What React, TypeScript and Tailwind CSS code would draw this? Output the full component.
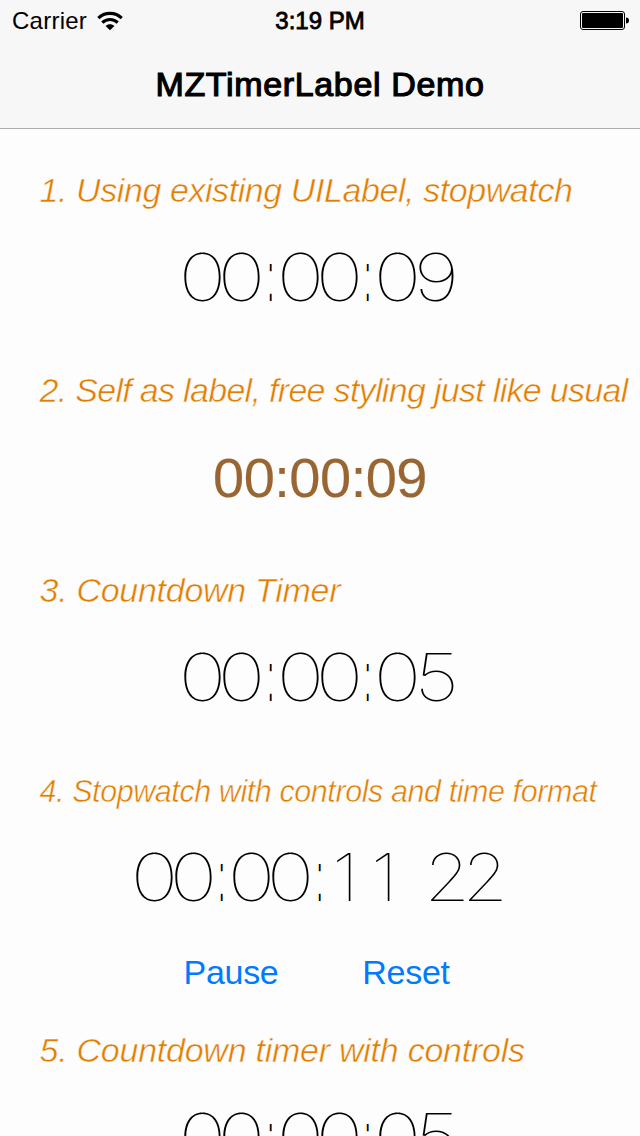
import React from "react";

const digitFit: Record<string, string> = {
  "0": "scale-x-[1.23]",
  "1": "-translate-x-[3px] scale-x-[1.1]",
  "2": "-translate-x-[0.5px] scale-x-[1.12]",
  "5": "translate-x-[0.5px] scale-x-[1.2]",
  "9": "scale-x-[1.23]",
};

function Glyph({ char }: { char: string }) {
  if (char === ":") {
    return (
      <span className="inline-block w-[19.5px] origin-center scale-x-[0.25] text-center font-['Liberation_Sans',Arial,sans-serif] text-[70px]">
        :
      </span>
    );
  }
  if (char === " ") {
    return <span className="inline-block w-[19.5px] whitespace-pre"> </span>;
  }
  return <span className={`inline-block w-[38.9px] text-center ${digitFit[char]}`}>{char}</span>;
}

function ThinClock({ value }: { value: string }) {
  return (
    <div className="flex h-[96px] items-baseline justify-center pr-[1px] font-[Inter,sans-serif] text-[66px] leading-[96px] font-[100] text-black">
      {value.split("").map((char, i) => (
        <Glyph key={i} char={char} />
      ))}
    </div>
  );
}

function Caption({ children, className }: { children: string; className: string }) {
  return (
    <h2
      className={`h-[44px] pl-[39.5px] leading-[44px] whitespace-nowrap text-[#e37d00] italic [-webkit-text-stroke:0.5px_#fdfdfd] ${className}`}
    >
      {children}
    </h2>
  );
}

export default function App() {
  return (
    <div className="h-[1136px] w-[640px] overflow-hidden bg-[#fdfdfd] font-['Liberation_Sans',Arial,sans-serif]">
      <header className="h-[129px] border-b border-[#adadad] bg-[#f7f7f7] text-black">
        <div className="grid h-[41px] grid-cols-3 items-center">
          <div className="flex items-center pl-[12px] text-[24px]">
            <span className="tracking-[0.25px]">Carrier</span>
            <svg className="ml-[10px] h-[20px] w-[26px]" viewBox="0 0 26 20" fill="none" stroke="black" strokeWidth="3.1">
              <path d="M1.300 7.200C7.500 0.800 18.500 0.800 24.700 7.200" />
              <path d="M5.300 11.700C9.500 7.500 16.500 7.500 20.700 11.700" />
              <path d="M8.600 14.900C11 12.600 15 12.600 17.400 14.900L13 19.300Z" fill="black" stroke="none" />
            </svg>
          </div>
          <div className="text-center text-[24px] [-webkit-text-stroke:0.8px_black]">3:19 PM</div>
          <svg className="ml-auto mr-[10px] h-[20px] w-[50px]" viewBox="0 0 50 20">
            <rect x="0.500" y="0.500" width="44" height="18" rx="2.500" fill="none" stroke="black" />
            <rect x="2" y="2" width="41" height="15" rx="1" fill="black" />
            <path d="M46 6.500C48 6.500 49 7.800 49 9.500C49 11.200 48 12.500 46 12.500Z" fill="black" />
          </svg>
        </div>
        <h1 className="text-center text-[34px] leading-[86px] tracking-[0.65px] [-webkit-text-stroke:1.2px_black]">
          MZTimerLabel Demo
        </h1>
      </header>

      <main className="flex flex-col pt-[39px]">
        <section className="h-[200px]">
          <Caption className="text-[34px] tracking-[-0.42px]">1. Using existing UILabel, stopwatch</Caption>
          <div className="pt-[17px]">
            <ThinClock value="00:00:09" />
          </div>
        </section>
        <section className="h-[200px]">
          <Caption className="text-[34px] tracking-[-0.69px]">2. Self as label, free styling just like usual</Caption>
          <div className="pt-[18px] text-center text-[56px] leading-[96px] tracking-[-0.5px] text-[#996633] [-webkit-text-stroke:0.2px_#996633]">
            00:00:09
          </div>
        </section>
        <section className="h-[200px]">
          <Caption className="text-[34px] tracking-[-0.28px]">3. Countdown Timer</Caption>
          <div className="pt-[17px]">
            <ThinClock value="00:00:05" />
          </div>
        </section>
        <section className="h-[260px]">
          <Caption className="pt-[1px] text-[30.5px] tracking-[-0.42px]">4. Stopwatch with controls and time format</Caption>
          <div className="pt-[17px]">
            <ThinClock value="00:00:11 22" />
          </div>
          <div className="flex h-[92px] items-center pt-[3px] text-[34px] tracking-[-0.3px] text-[#007aff]">
            <button className="ml-[183px] w-[96px]">Pause</button>
            <button className="ml-[82px] w-[90px]">Reset</button>
          </div>
        </section>
        <section className="h-[108px] overflow-hidden">
          <Caption className="text-[34px] tracking-[-0.25px]">5. Countdown timer with controls</Caption>
          <div className="pt-[17px]">
            <ThinClock value="00:00:05" />
          </div>
        </section>
      </main>
    </div>
  );
}
